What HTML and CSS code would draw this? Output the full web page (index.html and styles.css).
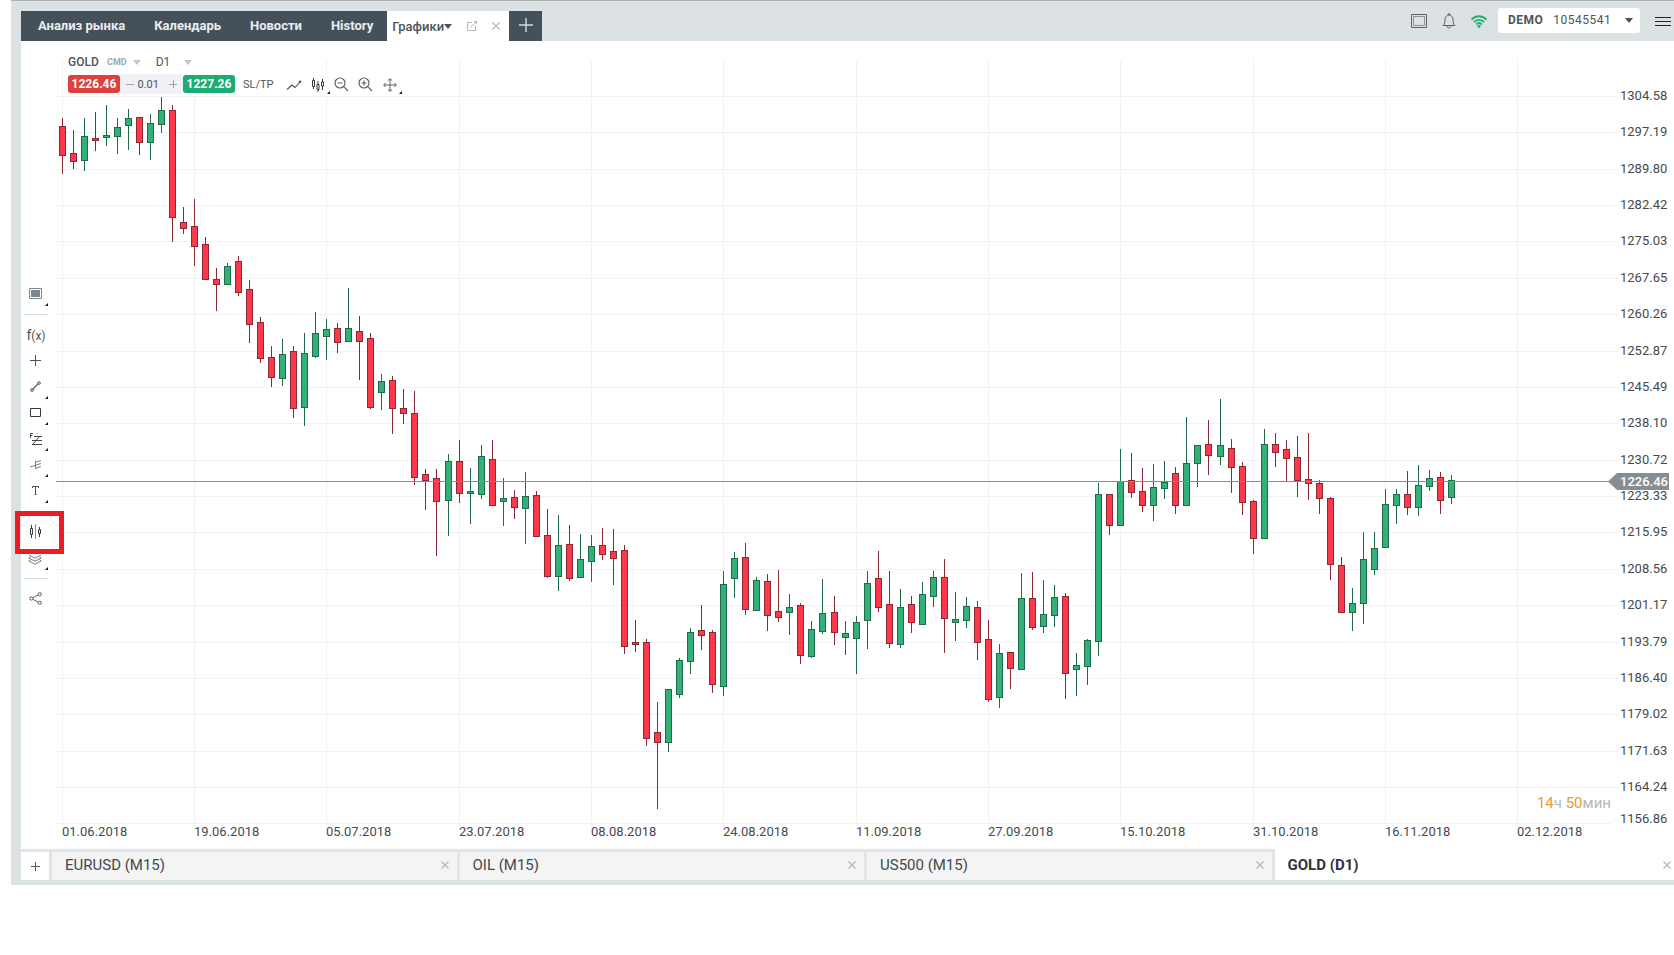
FILE: index.html
```html
<!DOCTYPE html>
<html lang="ru">
<head>
<meta charset="utf-8">
<title>GOLD (D1)</title>
<link rel="stylesheet" href="styles.css">
</head>
<body>
<div class="app">
  <header class="topbar">
    <nav class="nav">
      <a class="nav-link" href="#">Анализ рынка</a>
      <a class="nav-link" href="#">Календарь</a>
      <a class="nav-link" href="#">Новости</a>
      <a class="nav-link" href="#">History</a>
      <div class="nav-active">
        <a class="nav-current" href="#">Графики<span class="caret"></span></a>
        <button class="plain" aria-label="Открыть в окне"><svg width="12" height="12" viewBox="0 0 12 12" fill="none" stroke="#b4b8bb"><path d="M6 2.500H1.500V10.500H9.500V6M4.500 7.500L10 2M7.500 1.500H10.500V4.500"/></svg></button>
        <button class="plain" aria-label="Закрыть вкладку"><svg width="8" height="8" viewBox="0 0 8 8" stroke="#b4b8bb" stroke-width="1.300"><path d="M.5.5L7.500 7.500M7.500.5L.5 7.500"/></svg></button>
      </div>
      <button class="nav-add" aria-label="Добавить"><svg width="14" height="14" viewBox="0 0 14 14" stroke="#d5d9db" stroke-width="1.400"><path d="M7 0V14M0 7H14"/></svg></button>
    </nav>
    <div class="status">
      <button class="plain" aria-label="Полный экран"><svg width="16" height="14" viewBox="0 0 16 14" fill="none" stroke="#596067"><path d="M.5.5H15.500V13.500H.5Z"/><path d="M2.500 2.500H13.500V11.500H2.500Z" stroke="#8b9397"/></svg></button>
      <button class="plain" aria-label="Уведомления"><svg width="14" height="16" viewBox="0 0 14 16" fill="none" stroke="#596067"><path d="M1 12.500C3 11 2.800 9 3 6.500C3.200 3.500 5 2 7 2C9 2 10.800 3.500 11 6.500C11.200 9 11 11 13 12.500Z"/><path d="M6.200 2V.8H7.800V2M5 13C5.200 15.500 8.800 15.500 9 13"/></svg></button>
      <svg class="wifi" width="16" height="13" viewBox="0 0 16 13" fill="none" stroke="#20ad70" stroke-width="1.900"><path d="M.6 4.600C4.800.1 11.200.1 15.400 4.600M2.900 7.100C5.800 4.100 10.200 4.100 13.100 7.100M5.200 9.500C6.900 7.800 9.100 7.800 10.800 9.500"/><circle cx="8" cy="11.300" r="1.500" fill="#20ad70" stroke="none"/></svg>
      <div class="account">
        <label for="account">DEMO</label>
        <select id="account"><option>10545541</option></select>
        <span class="caret"></span>
      </div>
      <button class="plain menu" aria-label="Меню"><svg width="16" height="9" viewBox="0 0 16 9" stroke="#22272a"><path d="M0 .5H16M0 4.500H16M0 8.500H16"/></svg></button>
    </div>
  </header>

  <main class="workspace">
    <aside class="tools">
      <button class="tool more" aria-label="Шаблоны"><svg width="13" height="11" viewBox="0 0 13 11"><path d="M.5.5H12.500V10.500H.5Z" fill="none" stroke="#7d868c"/><path d="M2 2H11V9H2Z" fill="#7d868c"/></svg></button>
      <hr class="rule">
      <button class="tool fx" aria-label="Индикаторы">f<small>(x)</small></button>
      <button class="tool" aria-label="Перекрестие"><svg width="11" height="11" viewBox="0 0 11 11" stroke="#4d5459"><path d="M5.500 0V11M0 5.500H11"/></svg></button>
      <button class="tool more" aria-label="Линия"><svg width="11" height="11" viewBox="0 0 11 11" stroke="#5b6267" fill="#aab0b3"><path d="M2 9L9 2" stroke-width="1.300"/><circle cx="2" cy="9" r="1.500" stroke-width=".7"/><circle cx="9" cy="2" r="1.500" stroke-width=".7"/></svg></button>
      <button class="tool more" aria-label="Прямоугольник"><svg width="11" height="9" viewBox="0 0 11 9" stroke="#33393e" fill="none"><path d="M.5.5H10.500V8.500H.5Z"/></svg></button>
      <button class="tool more" aria-label="Фибоначчи"><svg width="13" height="12" viewBox="0 0 13 12" stroke="#42484d" fill="none"><path d="M1.500 5V.5H4M1.500 2.500H3.500M5 3.500H13M3 7.500H13M3 11.500H13M4 11L11 3"/></svg></button>
      <button class="tool more" aria-label="Вилы"><svg width="13" height="11" viewBox="0 0 13 11" stroke="#7b8286" fill="none"><path d="M1 8L12 4.500M6 3.500L12 1.500M6 9.500L12 7.500M6.500 1.500V10"/></svg></button>
      <button class="tool more" aria-label="Текст"><svg width="7" height="9" viewBox="0 0 7 9" stroke="#4d5459" fill="none"><path d="M.5 2V.5H6.500V2M3.500.5V8.500M2.500 8.500H4.500"/></svg></button>
      <hr class="rule">
      <button class="tool marked" aria-label="Параметры графика"><svg width="13" height="15" viewBox="0 0 13 15" stroke="#353b40" fill="none"><path d="M2.500 1V4.500M2.500 10.500V14M1.500 4.500H3.500V10.500H1.500ZM10.500 3V5.500M10.500 9.500V13M9.500 5.500H11.500V9.500H9.500Z"/><path d="M6.500 0V15" stroke="#858c90"/></svg></button>
      <button class="tool more" aria-label="Слои"><svg width="14" height="14" viewBox="0 0 14 14" stroke="#777f84" fill="none"><path d="M.8 4L7 7.200L13.200 4M.8 7L7 10.200L13.200 7M.8 10L7 13.200L13.200 10M.8 7L2.500 6M13.200 7L11.500 6M.8 10L2.500 9M13.200 10L11.500 9"/></svg></button>
      <hr class="rule">
      <button class="tool" aria-label="Поделиться"><svg width="13" height="13" viewBox="0 0 13 13" stroke="#596065" fill="none"><path d="M3.700 5.700L9.300 2.900M3.700 7.300L9.300 10.100"/><circle cx="2.200" cy="6.500" r="1.600"/><circle cx="10.800" cy="2.200" r="1.600"/><circle cx="10.800" cy="10.800" r="1.600"/></svg></button>
    </aside>

    <section class="chart-area">
      <svg class="chart" viewBox="56 41 1618 808" role="img" aria-label="GOLD D1">
        <g id="grid" class="grid"></g>
        <g id="candles" class="candles"></g>
        <path class="price-line" d="M56 481.500H1610"/>
        <g id="labels" class="labels"></g>
        <path class="price-tag" d="M1608 481.500L1617 473H1669V490H1617Z"/>
        <text class="price-now" x="1620" y="486">1226.46</text>
        <text class="countdown" x="1611" y="808">14<tspan>ч</tspan> 50<tspan>мин</tspan></text>
      </svg>
      <div class="panel">
        <div class="symbol">
          <select class="pick name" aria-label="Инструмент"><option>GOLD</option></select>
          <span class="kind">CMD</span><span class="caret pale"></span>
          <select class="pick frame" aria-label="Период"><option>D1</option></select>
          <span class="caret pale"></span>
        </div>
        <div class="trade">
          <button class="deal sell">1226.46</button>
          <div class="volume">
            <button class="plain" aria-label="Меньше"><svg width="8" height="8" viewBox="0 0 8 8" stroke="#a0a4a8"><path d="M0 4.500H8"/></svg></button>
            <input aria-label="Объём" value="0.01">
            <button class="plain" aria-label="Больше"><svg width="8" height="8" viewBox="0 0 8 8" stroke="#a0a4a8"><path d="M0 4.500H8M4.500 0V8"/></svg></button>
          </div>
          <button class="deal buy">1227.26</button>
          <button class="plain sltp">SL/TP</button>
          <button class="icon" aria-label="Тип линии"><svg width="16" height="12" viewBox="0 0 16 12" stroke="#4d5459" fill="none"><path d="M1 10.500L6 6L9 8.500L14.500 2.500" stroke-width="1.100"/><circle cx="14" cy="2.800" r="1.300" fill="#4d5459" stroke="none"/></svg></button>
          <button class="icon more" aria-label="Свечи"><svg width="12" height="14" viewBox="0 0 12 14" stroke="#33393e" fill="none"><path d="M1.500 0V2.500M1.500 8.500V11M.5 2.500H2.500V8.500H.5ZM6 3V6.500M6 11.500V14M5 6.500H7V11.500H5ZM10.500 1V4M10.500 8V12M9.500 4H11.500V8H9.500Z"/></svg></button>
          <button class="icon" aria-label="Уменьшить"><svg width="15" height="15" viewBox="0 0 15 15" stroke="#5a6166" fill="none" stroke-width="1.200"><circle cx="6" cy="6" r="5"/><path d="M9.700 9.700L14 14M3.500 6H8.500"/></svg></button>
          <button class="icon" aria-label="Увеличить"><svg width="15" height="15" viewBox="0 0 15 15" stroke="#5a6166" fill="none" stroke-width="1.200"><circle cx="6" cy="6" r="5"/><path d="M9.700 9.700L14 14M3.500 6H8.500M6 3.500V8.500"/></svg></button>
          <button class="icon more" aria-label="Перемещение"><svg width="14" height="14" viewBox="0 0 14 14" stroke="#5a6166" fill="none"><path d="M7 1V13M1 7H13M5 2.500L7 .7L9 2.500M5 11.500L7 13.300L9 11.500M2.500 5L.7 7L2.500 9M11.500 5L13.300 7L11.500 9"/></svg></button>
        </div>
      </div>
    </section>
  </main>

  <footer class="sheets">
    <button class="sheet-add" aria-label="Новый график"><svg width="9" height="9" viewBox="0 0 9 9" stroke="#4d5459"><path d="M4.500 0V9M0 4.500H9"/></svg></button>
    <div class="sheet-list">
      <div class="sheet"><a href="#">EURUSD (M15)</a><button class="plain" aria-label="Закрыть EURUSD"><svg width="8" height="8" viewBox="0 0 8 8" stroke="#b4b8bb" stroke-width="1.300"><path d="M.5.5L7.500 7.500M7.500.5L.5 7.500"/></svg></button></div>
      <div class="sheet"><a href="#">OIL (M15)</a><button class="plain" aria-label="Закрыть OIL"><svg width="8" height="8" viewBox="0 0 8 8" stroke="#b4b8bb" stroke-width="1.300"><path d="M.5.5L7.500 7.500M7.500.5L.5 7.500"/></svg></button></div>
      <div class="sheet"><a href="#">US500 (M15)</a><button class="plain" aria-label="Закрыть US500"><svg width="8" height="8" viewBox="0 0 8 8" stroke="#b4b8bb" stroke-width="1.300"><path d="M.5.5L7.500 7.500M7.500.5L.5 7.500"/></svg></button></div>
      <div class="sheet current"><a href="#">GOLD (D1)</a><button class="plain" aria-label="Закрыть GOLD"><svg width="8" height="8" viewBox="0 0 8 8" stroke="#b4b8bb" stroke-width="1.300"><path d="M.5.5L7.500 7.500M7.500.5L.5 7.500"/></svg></button></div>
    </div>
  </footer>
</div>
<script src="chart.js"></script>
</body>
</html>
```

FILE: styles.css
```css
*, *::after { box-sizing: border-box; }

body {
  margin: 0;
  background: #fff;
  color: #4d5459;
  font-family: Roboto, "Noto Sans", sans-serif;
  font-size: 13px;
  overflow-x: hidden;
}

a { color: inherit; text-decoration: none; }

button, select, input {
  margin: 0;
  padding: 0;
  border: 0;
  background: none;
  color: inherit;
  font: inherit;
}

select { appearance: none; }
svg { display: block; }

.app {
  margin-left: 11px;
  border: solid #dce1e3;
  border-width: 0 0 5px 10px;
}

.topbar {
  display: flex;
  justify-content: space-between;
  height: 41px;
  margin-left: -10px;
  padding-left: 10px;
  border-top: 1px solid #a9afb2;
  background: #dce1e3;
}

.nav {
  display: flex;
  align-self: flex-end;
  height: 30px;
  padding-left: 2px;
  background: #44515a;
  color: #eceef0;
  font-weight: 700;
}

.nav-link { padding: 0 14px 0 15px; line-height: 30px; }

.nav-active {
  display: flex;
  align-items: center;
  justify-content: space-between;
  width: 122px;
  padding: 0 9px 0 5px;
  background: #fff;
  color: #4d5459;
}

.nav-current { display: flex; align-items: center; font-weight: 500; }

.caret {
  border: solid transparent;
  border-width: 5px 4px 0;
  border-top-color: #4a5157;
}

.caret.pale { border-top-color: #c3c7ca; }

.nav-add {
  display: flex;
  align-items: center;
  justify-content: center;
  width: 33px;
  padding-bottom: 2px;
}

.status {
  display: flex;
  align-items: center;
  height: 40px;
  padding-right: 3px;
}

.status > button + button { margin-left: 15px; }
.wifi { margin-left: 15px; }

.account {
  display: flex;
  align-items: center;
  width: 142px;
  height: 25px;
  margin: 0 0 2px 11px;
  padding: 0 7px 0 10px;
  border-radius: 3px;
  background: #fff;
  font-size: 12px;
}

.account label { font-weight: 700; letter-spacing: 0.5px; }

.account select {
  flex: 1;
  margin-left: 10px;
  letter-spacing: 0.5px;
}

.menu { margin-left: 15px; }

.workspace { display: flex; }

.tools {
  display: flex;
  flex-direction: column;
  justify-content: center;
  width: 35px;
  padding: 2px 8px 0 3px;
}

.tool {
  position: relative;
  display: flex;
  align-items: center;
  justify-content: center;
  height: 26px;
  padding-right: 2px;
}

.fx { align-items: baseline; padding: 0; font-size: 14px; line-height: 26px; }
.fx small { font-size: 12px; }

.rule {
  width: 100%;
  height: 1px;
  margin: 7px 0;
  border: 0;
  background: #dcdfe0;
}

.more::after {
  content: "";
  position: absolute;
  right: 0;
  bottom: 1px;
  border: solid transparent;
  border-width: 0 0 3px 3px;
  border-bottom-color: #111;
}

.marked::after {
  content: "";
  position: absolute;
  z-index: 2;
  top: -8px;
  left: -9px;
  width: 49px;
  height: 43px;
  border: 5px solid #ea1c24;
}

.chart-area { position: relative; flex: 1; min-width: 0; }
.chart { width: 100%; height: auto; }
.grid { stroke: #f1f2f2; shape-rendering: crispEdges; }
.candles { shape-rendering: crispEdges; }
.up { fill: #31b177; stroke: #1f6b4c; }
.down { fill: #fb394a; stroke: #8c2833; }
.price-line { stroke: #868c90; shape-rendering: crispEdges; }
.price-tag { fill: #868e94; }
.labels { fill: #454a4e; font-size: 13px; }
.price-now { fill: #fff; font-size: 13px; font-weight: 500; }
.countdown { fill: #ee9a32; font-size: 15px; text-anchor: end; }
.countdown tspan { fill: #b5b8ba; }

.panel {
  position: absolute;
  top: 11px;
  left: 10px;
}

.symbol {
  display: flex;
  align-items: center;
  width: 132px;
  height: 20px;
  padding-left: 2px;
  background: #fff;
  font-size: 12px;
}

.name { font-weight: 500; }
.kind { margin: 0 6px 0 8px; color: #9aa8b1; font-size: 9px; font-weight: 700; }
.frame { margin: 0 13px 0 15px; }

.trade {
  display: flex;
  align-items: center;
  height: 24px;
  padding-left: 2px;
  background: #fff;
  font-size: 12px;
}

.deal {
  width: 52px;
  height: 18px;
  border-radius: 3px;
  color: #fff;
  font-weight: 700;
}

.sell { background: #dd403d; }
.buy { background: #1cad73; }

.volume {
  display: flex;
  align-items: center;
  justify-content: space-between;
  width: 63px;
  height: 20px;
  padding: 0 6px;
  background: #f0f1f5;
  font-size: 11px;
}

.volume input { width: 28px; }
.sltp { margin: 0 8px; font-size: 11px; }

.icon {
  position: relative;
  display: flex;
  align-items: center;
  justify-content: center;
  width: 24px;
  height: 22px;
  padding-top: 1px;
}

.sheets {
  display: flex;
  height: 31px;
  background: #e1e5e7;
  overflow: hidden;
}

.sheet-add {
  display: flex;
  align-items: center;
  justify-content: center;
  width: 28px;
  margin: 3px 3px 0 0;
  background: #fff;
}

.sheet-list { display: flex; flex: 1; gap: 3px; min-width: 0; }

.sheet {
  display: flex;
  flex: 0 0 calc(25% - 1px);
  align-items: center;
  justify-content: space-between;
  margin-top: 3px;
  padding: 0 8px 2px 13px;
  background: #f4f4f4;
  color: #43484c;
  font-size: 15px;
}

.sheet.current {
  margin-top: 0;
  padding-top: 3px;
  background: #fff;
  color: #2f3437;
  font-weight: 700;
}
```

FILE: chart.js
```js
// One row per day: direction, high, body top, body bottom, low (vertical chart units).
const days = `
d 118 126 156 174|d 130 153 162 169|u 118 136 161 171|d 112 138 141 151|u 105 135 138 146|u 118 127 137 154
u 109 118 126 150|d 117 117 143 155|u 114 123 143 160|u 97 110 125 133|d 105 110 218 242|d 207 222 229 234
d 199 226 247 266|d 237 244 280 280|d 268 279 285 311|u 263 266 285 285|d 256 261 293 296|d 280 289 325 343
d 317 322 359 363|d 346 357 378 387|u 339 354 379 386|d 346 351 409 418|u 333 353 408 426|u 312 333 357 358
u 319 329 337 360|d 323 328 343 353|u 288 328 342 342|d 316 331 342 380|d 333 338 408 409|u 374 381 393 410
d 376 380 409 434|d 389 408 414 424|d 391 413 478 485|d 469 474 481 510|d 469 478 502 556|u 454 461 501 536
d 440 461 494 503|u 468 491 494 524|u 445 456 495 499|d 440 459 506 506|u 478 498 502 526|d 490 497 508 519
u 472 496 509 544|d 491 495 537 537|d 509 535 577 578|u 515 545 577 591|d 525 544 579 581|u 534 559 578 578
u 535 546 562 582|d 528 545 555 560|d 529 551 559 585|d 545 550 647 654|d 620 642 645 652|d 639 642 739 746
d 702 732 743 809|u 689 689 743 752|u 658 660 695 698|u 628 632 662 674|d 605 630 636 650|d 630 632 685 693
u 571 584 687 696|u 552 558 579 598|d 543 557 610 615|u 577 580 611 611|d 574 581 616 631|d 570 611 618 622
u 594 607 613 635|d 603 605 656 664|u 621 629 657 658|u 579 613 632 634|d 596 612 633 645|u 621 633 638 655
u 616 622 639 674|u 571 583 621 649|d 551 578 608 612|d 571 604 644 648|u 589 607 645 648|d 596 604 623 633
u 582 594 625 625|u 571 577 597 607|d 559 577 619 653|u 592 619 623 641|u 597 606 621 628|d 601 607 643 660
d 620 639 700 702|u 644 653 698 708|d 652 652 669 689|u 573 598 670 670|d 572 598 628 630|u 580 614 627 633
u 585 597 616 627|d 593 596 674 699|u 653 665 670 696|u 639 640 667 685|u 483 494 642 656|d 494 494 526 535
u 449 481 526 526|d 453 480 493 498|d 468 491 506 512|u 464 487 506 521|u 461 482 489 499|d 467 473 506 514
u 417 463 506 506|u 445 445 464 487|d 420 444 456 475|u 399 445 457 465|d 439 448 468 493|d 462 466 503 515
d 500 501 539 554|u 429 444 539 539|d 433 444 453 467|d 440 449 459 481|d 436 457 481 497|d 433 479 484 500
d 480 483 499 514|d 497 498 565 580|d 557 565 613 613|u 588 603 613 631|u 532 559 604 624|u 532 548 570 575
u 489 504 548 548|u 489 494 506 524|d 471 494 508 515|u 465 485 508 516|u 470 478 487 491|d 472 477 501 514
u 475 480 498 504`.trim().split(/[|\n]/);

const dates = ["01.06.2018", "19.06.2018", "05.07.2018", "23.07.2018", "08.08.2018", "24.08.2018",
  "11.09.2018", "27.09.2018", "15.10.2018", "31.10.2018", "16.11.2018", "02.12.2018"];
const prices = ["1304.58", "1297.19", "1289.80", "1282.42", "1275.03", "1267.65", "1260.26",
  "1252.87", "1245.49", "1238.10", "1230.72", "1223.33", "1215.95", "1208.56", "1201.17",
  "1193.79", "1186.40", "1179.02", "1171.63", "1164.24", "1156.86"];

const dayX = i => 62 + 11 * i + Math.floor(i / 35);
const last = prices.length - 1;
let grid = "", labels = "";

prices.forEach((price, i) => {
  const y = Math.floor(96.47 + i * 36.37);
  grid += `<path d="M56 ${y + 0.5}H${i === last ? 1611 : 1618}"/>`;
  labels += `<text x="1620" y="${i === last ? y : y + 4}">${price}</text>`;
});

dates.forEach((date, i) => {
  const x = dayX(i * 12);
  grid += `<path d="M${x + 0.5} 60V827"/>`;
  labels += `<text x="${x}" y="836">${date}</text>`;
});

document.getElementById("grid").innerHTML = grid;
document.getElementById("labels").innerHTML = labels;
document.getElementById("candles").innerHTML = days.map((day, i) => {
  const [dir, high, top, bottom, low] = day.split(" ");
  const x = dayX(i);
  return `<g class="${dir === "u" ? "up" : "down"}"><path d="M${x + 0.5} ${high}V${low}"/>` +
    `<rect x="${x - 2.5}" y="${+top + 0.5}" width="6" height="${bottom - top - 1}"/></g>`;
}).join("");
```
